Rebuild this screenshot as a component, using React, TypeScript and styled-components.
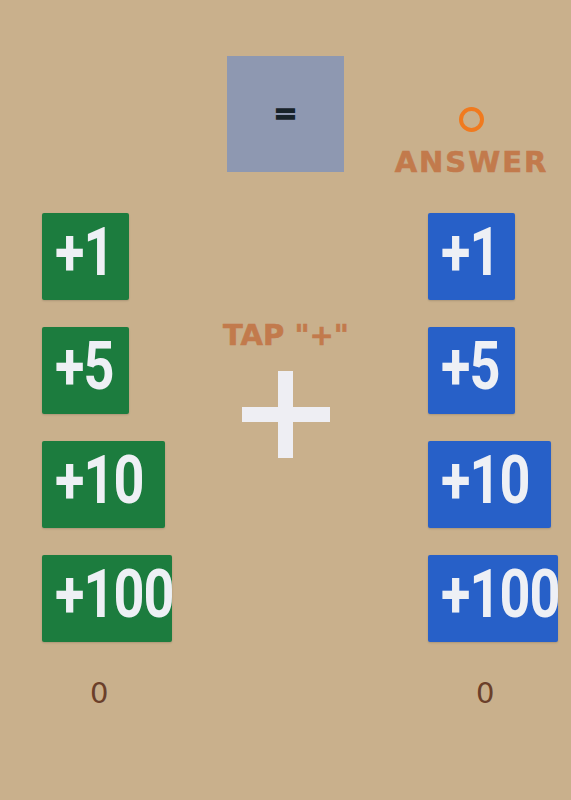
import React from 'react'
import styled, { createGlobalStyle } from 'styled-components'

const GlobalStyle = createGlobalStyle`
  body {
    margin: 0;
    background-color: #c9b08c;
    font-family: 'DejaVu Sans', sans-serif;
  }
`

const StyledPage = styled.div`
  width: 571px;
  min-height: 800px;
  background-color: #c9b08c;
  overflow: hidden;
`

const StyledTopRow = styled.div`
  display: flex;
  align-items: flex-start;
  height: 116px;
  padding: 56px 0 0 227px;
`

const StyledEqualsBox = styled.div`
  width: 117px;
  height: 116px;
  display: flex;
  align-items: center;
  justify-content: center;
  background-color: #8e98b1;
  color: #17232a;
  font-family: 'DejaVu Sans', sans-serif;
  font-weight: 700;
  font-size: 28px;
  -webkit-text-stroke: 1.6px #17232a;
  padding-bottom: 2px;
  box-sizing: border-box;
`

const StyledAnswer = styled.div`
  width: 153px;
  margin: 51px 0 0 51px;
  display: flex;
  flex-direction: column;
  align-items: center;
  gap: 13px;
`

const StyledAnswerDot = styled.div`
  width: 17px;
  height: 17px;
  border: 4px solid #f07a1f;
  border-radius: 50%;
`

const StyledLabel = styled.div<{ $spacing?: number }>`
  font-family: 'DejaVu Sans', sans-serif;
  font-weight: 700;
  font-size: 29px;
  letter-spacing: ${(p) => p.$spacing ?? 0}px;
  color: #c27a4c;
  -webkit-text-stroke: 0.6px #c27a4c;
  white-space: nowrap;
`

const StyledBoard = styled.div`
  display: grid;
  grid-template-columns: 130px 1fr 130px;
  margin-top: 41px;
  padding: 0 13px 0 42px;
`

const StyledColumn = styled.div`
  display: flex;
  flex-direction: column;
  align-items: flex-start;
  gap: 27px;
`

const StyledCenter = styled.div`
  display: flex;
  flex-direction: column;
  align-items: center;
  padding: 105px 28px 0 0;
  gap: 19px;
`

const StyledAddButton = styled.button<{ $color: string; $width: number }>`
  width: ${(p) => p.$width}px;
  height: 87px;
  padding: 0 0 0 13px;
  display: flex;
  align-items: flex-start;
  border: none;
  border-radius: 2px;
  background-color: ${(p) => p.$color};
  box-shadow: 0 1px 2px rgba(0, 0, 0, 0.15);
  color: #eef0f5;
  font-family: Roboto, 'DejaVu Sans', sans-serif;
  font-weight: 700;
  font-size: 54px;
  line-height: 54px;
  letter-spacing: -1px;
  white-space: nowrap;
  overflow: hidden;
  cursor: pointer;
`

const StyledButtonText = styled.span`
  display: block;
  margin-top: 7px;
  transform: scaleY(1.22);
  transform-origin: 0 0;
`

const StyledCount = styled.div`
  margin-top: 34px;
  padding-left: 48px;
  font-family: 'DejaVu Sans', sans-serif;
  font-size: 29px;
  color: #6b3f2a;
`

const PlusIcon = () => (
  <svg width="88" height="87" viewBox="0 0 88 87">
    <rect x="36" y="0" width="15" height="87" fill="#eeeef3" />
    <rect x="0" y="36" width="88" height="15" fill="#eeeef3" />
  </svg>
)

const steps = [
  { label: '+1', width: 87 },
  { label: '+5', width: 87 },
  { label: '+10', width: 123 },
  { label: '+100', width: 130 },
]

const Player = ({ color, count }: { color: string; count: number }) => (
  <div>
    <StyledColumn>
      {steps.map((s) => (
        <StyledAddButton key={s.label} $color={color} $width={s.width}>
          <StyledButtonText>{s.label}</StyledButtonText>
        </StyledAddButton>
      ))}
    </StyledColumn>
    <StyledCount>{count}</StyledCount>
  </div>
)

export default function App() {
  return (
    <StyledPage>
      <GlobalStyle />
      <StyledTopRow>
        <StyledEqualsBox>=</StyledEqualsBox>
        <StyledAnswer>
          <StyledAnswerDot />
          <StyledLabel $spacing={2}>ANSWER</StyledLabel>
        </StyledAnswer>
      </StyledTopRow>
      <StyledBoard>
        <Player color="#1c7c3e" count={0} />
        <StyledCenter>
          <StyledLabel>TAP "+"</StyledLabel>
          <PlusIcon />
        </StyledCenter>
        <Player color="#2760c8" count={0} />
      </StyledBoard>
    </StyledPage>
  )
}
